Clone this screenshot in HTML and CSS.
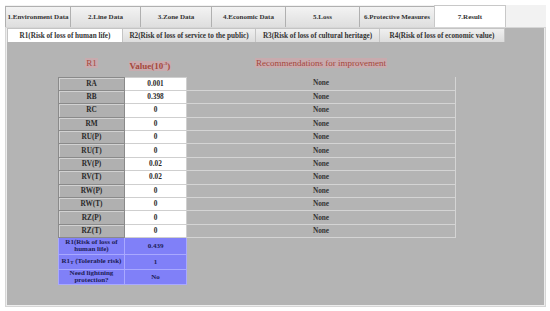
FILE: index.html
```html
<!DOCTYPE html>
<html lang="en">
<head>
    <meta charset="UTF-8">
    <title>Risk Assessment - Result</title>
    <link rel="stylesheet" href="styles.css">
</head>
<body>
    <div class="frame">
        <div class="tabs">
            <div class="tab t1">1.Environment Data</div>
            <div class="tab t2">2.Line Data</div>
            <div class="tab t3">3.Zone Data</div>
            <div class="tab t4">4.Economic Data</div>
            <div class="tab t5">5.Loss</div>
            <div class="tab t6">6.Protective Measures</div>
            <div class="tab t7 active">7.Result</div>
        </div>

        <div class="page">
            <div class="subtabs">
                <div class="subtab s1 active">R1(Risk of loss of human life)</div>
                <div class="subtab s2">R2(Risk of loss of service to the public)</div>
                <div class="subtab s3">R3(Risk of loss of cultural heritage)</div>
                <div class="subtab s4">R4(Risk of loss of economic value)</div>
            </div>

            <div class="content">
                <table class="result">
                    <tr class="head">
                        <th><span class="hl">R1</span></th>
                        <th class="val-head"><span class="hl bold">Value(10<sup>-3</sup>)</span></th>
                        <th><span class="hl">Recommendations for improvement</span></th>
                    </tr>
                    <tr><td class="label">RA</td><td class="value">0.001</td><td class="rec">None</td></tr>
                    <tr><td class="label">RB</td><td class="value">0.398</td><td class="rec">None</td></tr>
                    <tr><td class="label">RC</td><td class="value">0</td><td class="rec">None</td></tr>
                    <tr><td class="label">RM</td><td class="value">0</td><td class="rec">None</td></tr>
                    <tr><td class="label">RU(P)</td><td class="value">0</td><td class="rec">None</td></tr>
                    <tr><td class="label">RU(T)</td><td class="value">0</td><td class="rec">None</td></tr>
                    <tr><td class="label">RV(P)</td><td class="value">0.02</td><td class="rec">None</td></tr>
                    <tr><td class="label">RV(T)</td><td class="value">0.02</td><td class="rec">None</td></tr>
                    <tr><td class="label">RW(P)</td><td class="value">0</td><td class="rec">None</td></tr>
                    <tr><td class="label">RW(T)</td><td class="value">0</td><td class="rec">None</td></tr>
                    <tr><td class="label">RZ(P)</td><td class="value">0</td><td class="rec">None</td></tr>
                    <tr><td class="label">RZ(T)</td><td class="value">0</td><td class="rec">None</td></tr>
                    <tr class="sum tall"><td class="label">R1(Risk of loss of<br>human life)</td><td class="value">0.439</td></tr>
                    <tr class="sum"><td class="label">R1<sub>T</sub> (Tolerable risk)</td><td class="value">1</td></tr>
                    <tr class="sum"><td class="label">Need lightning<br>protection?</td><td class="value">No</td></tr>
                </table>
            </div>
        </div>
    </div>
</body>
</html>
```

FILE: styles.css
```css
* {
    margin: 0;
    padding: 0;
    box-sizing: border-box;
}

body {
    font-family: 'Liberation Serif', 'Times New Roman', serif;
    background: #ffffff;
    color: #222;
}

.frame {
    margin: 5px 0 0 5px;
    width: 541px;
}

/* main tabs */
.tabs {
    display: flex;
    align-items: flex-end;
    height: 22px;
    background: #f2f2f2;
}

.tab {
    height: 21px;
    display: flex;
    align-items: center;
    justify-content: center;
    font-size: 7px;
    font-weight: bold;
    color: #333;
    background: linear-gradient(#f3f3f3, #dedede);
    border: 1px solid #b0b0b0;
    border-bottom: none;
    margin-right: -1px;
    white-space: nowrap;
}

.tab.active {
    height: 22px;
    background: #ffffff;
    border-color: #c8c8c8;
}

.t1 { width: 66px; }
.t2 { width: 71px; }
.t3 { width: 72px; }
.t4 { width: 75px; }
.t5 { width: 75px; }
.t6 { width: 76px; }
.t7 { width: 72px; }

/* tab page */
.page {
    border: 1px solid #d6d6d6;
    background: #ededed;
    padding: 0 1px 1px 1px;
}

.subtabs {
    display: flex;
    height: 14px;
    background: #b4b4b4;
}

.subtab {
    display: flex;
    align-items: center;
    justify-content: center;
    font-size: 7.2px;
    font-weight: bold;
    color: #333;
    background: linear-gradient(#f0f0f0, #dcdcdc);
    border: 1px solid #c4c4c4;
    border-bottom: none;
    margin-right: -1px;
    white-space: nowrap;
}

.subtab.active {
    background: #ffffff;
}

.s1 { width: 116px; }
.s2 { width: 134px; }
.s3 { width: 125px; }
.s4 { width: 126px; }

.content {
    height: 263px;
    background: #b4b4b4;
    padding: 15px 0 0 51px;
}

/* result table */
.result {
    border-collapse: collapse;
    font-size: 7.3px;
    font-weight: bold;
    color: #2a2a2a;
}

.result th {
    height: 20px;
    vertical-align: top;
    padding-top: 1px;
    font-size: 9px;
    font-weight: normal;
    line-height: 11px;
    color: #a6473c;
}

.result th:nth-child(1) { width: 66px; }
.result th:nth-child(2) { width: 62px; }
.result th:nth-child(3) { width: 269px; }

.val-head {
    text-align: left;
    padding-left: 4px;
}

.hl {
    background: #c8abae;
    padding: 0 1px;
}

.hl.bold {
    font-weight: bold;
}

.hl sup {
    font-size: 5px;
}

.result td {
    height: 13.4px;
    text-align: center;
    vertical-align: middle;
    line-height: 8px;
}

.label {
    background: #b0b0b0;
    border: 1px solid #8a8a8a;
    box-shadow: inset 1px 1px 0 #d2d2d2;
}

.value {
    background: #ffffff;
    border: 1px solid #cfcfcf;
}

.rec {
    border-bottom: 1px solid #d4d4d4;
    border-right: 1px solid #d4d4d4;
    color: #333;
}

.sum td {
    height: 15px;
    font-size: 7px;
    background: #8080f8;
    border: 1px solid #a9a9ff;
    box-shadow: none;
    color: #1c1c55;
    line-height: 7px;
}

.sum.tall td {
    height: 17px;
}

.sum sub {
    font-size: 5px;
    vertical-align: -1px;
}
```
